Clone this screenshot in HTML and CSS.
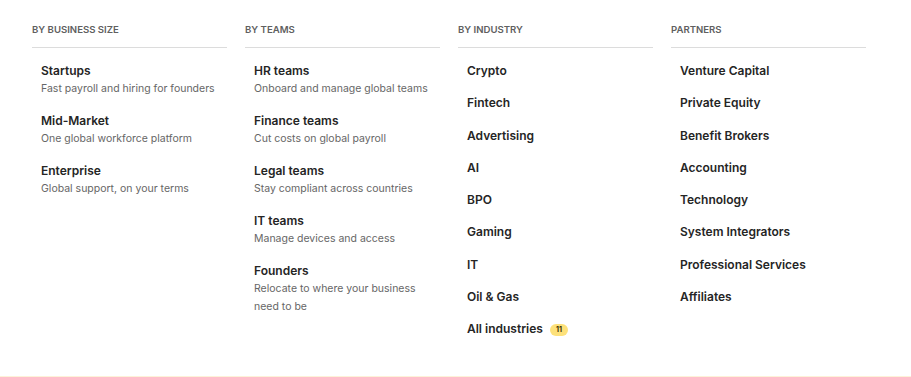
FILE: index.html
```html
<!DOCTYPE html>
<html lang="en">
<head>
    <meta charset="UTF-8">
    <meta name="viewport" content="width=device-width, initial-scale=1.0">
    <title>Solutions menu</title>
    <link rel="stylesheet" href="styles.css">
</head>
<body>

    <div class="menu">

        <div class="menu-col">
            <h4 class="col-title">By business size</h4>
            <ul class="item-list">
                <li class="item">
                    <span class="item-name">Startups</span>
                    <span class="item-desc">Fast payroll and hiring for founders</span>
                </li>
                <li class="item">
                    <span class="item-name">Mid-Market</span>
                    <span class="item-desc">One global workforce platform</span>
                </li>
                <li class="item">
                    <span class="item-name">Enterprise</span>
                    <span class="item-desc">Global support, on your terms</span>
                </li>
            </ul>
        </div>

        <div class="menu-col">
            <h4 class="col-title">By teams</h4>
            <ul class="item-list">
                <li class="item">
                    <span class="item-name">HR teams</span>
                    <span class="item-desc">Onboard and manage global teams</span>
                </li>
                <li class="item">
                    <span class="item-name">Finance teams</span>
                    <span class="item-desc">Cut costs on global payroll</span>
                </li>
                <li class="item">
                    <span class="item-name">Legal teams</span>
                    <span class="item-desc">Stay compliant across countries</span>
                </li>
                <li class="item">
                    <span class="item-name">IT teams</span>
                    <span class="item-desc">Manage devices and access</span>
                </li>
                <li class="item">
                    <span class="item-name">Founders</span>
                    <span class="item-desc">Relocate to where your business need to be</span>
                </li>
            </ul>
        </div>

        <div class="menu-col">
            <h4 class="col-title">By industry</h4>
            <ul class="item-list simple">
                <li class="item"><span class="item-name">Crypto</span></li>
                <li class="item"><span class="item-name">Fintech</span></li>
                <li class="item"><span class="item-name">Advertising</span></li>
                <li class="item"><span class="item-name">AI</span></li>
                <li class="item"><span class="item-name">BPO</span></li>
                <li class="item"><span class="item-name">Gaming</span></li>
                <li class="item"><span class="item-name">IT</span></li>
                <li class="item"><span class="item-name">Oil &amp; Gas</span></li>
                <li class="item"><span class="item-name">All industries <span class="badge">11</span></span></li>
            </ul>
        </div>

        <div class="menu-col">
            <h4 class="col-title">Partners</h4>
            <ul class="item-list simple">
                <li class="item"><span class="item-name">Venture Capital</span></li>
                <li class="item"><span class="item-name">Private Equity</span></li>
                <li class="item"><span class="item-name">Benefit Brokers</span></li>
                <li class="item"><span class="item-name">Accounting</span></li>
                <li class="item"><span class="item-name">Technology</span></li>
                <li class="item"><span class="item-name">System Integrators</span></li>
                <li class="item"><span class="item-name">Professional Services</span></li>
                <li class="item"><span class="item-name">Affiliates</span></li>
            </ul>
        </div>

    </div>

    <div class="menu-footer"></div>

</body>
</html>
```

FILE: styles.css
```css
body{
    margin: 0;
    background-color: #ffffff;
    font-family: Inter, "Noto Sans", sans-serif;
    color: #1f1f1f;
}

.menu{
    display: flex;
    gap: 18px;
    padding: 24px 32px 0px 32px;
    height: 376px;
    box-sizing: border-box;
}

.menu-col{
    width: 195px;
}

.col-title{
    margin: 0;
    padding-bottom: 11px;
    border-bottom: 1px solid #dcdcdc;
    font-size: 9.6px;
    line-height: 12px;
    font-weight: 600;
    text-transform: uppercase;
    color: #606060;
}

.item-list{
    list-style: none;
    margin: 0;
    padding: 13px 0px 0px 9px;
    display: flex;
    flex-direction: column;
    gap: 13px;
}

.item-list.simple{
    gap: 13.25px;
}

.item-name{
    display: block;
    font-size: 12px;
    line-height: 19px;
    font-weight: 600;
    color: #252525;
}

.item-desc{
    display: block;
    font-size: 10.5px;
    line-height: 18px;
    color: #666666;
    padding-right: 4px;
}

.badge{
    display: inline-block;
    vertical-align: 1px;
    margin-left: 4px;
    padding: 0px 6px;
    font-size: 7px;
    line-height: 12px;
    font-weight: 700;
    color: #3a3000;
    background-color: #fde17a;
    border-radius: 7px;
}

.menu-footer{
    height: 1px;
    background-color: #fdf2d8;
}
```
